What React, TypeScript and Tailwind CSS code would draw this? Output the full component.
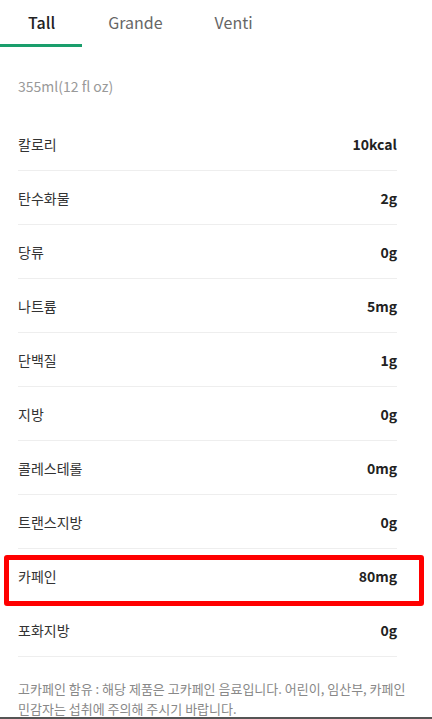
import React from "react";

const rows: [string, string][] = [
  ["칼로리", "10kcal"],
  ["탄수화물", "2g"],
  ["당류", "0g"],
  ["나트륨", "5mg"],
  ["단백질", "1g"],
  ["지방", "0g"],
  ["콜레스테롤", "0mg"],
  ["트랜스지방", "0g"],
  ["카페인", "80mg"],
  ["포화지방", "0g"],
];

export default function App() {
  return (
    <div
      className="relative w-[432px] h-[719px] overflow-hidden bg-white"
      style={{ fontFamily: '"Noto Sans CJK KR", "Noto Sans", sans-serif' }}
    >
      <div className="flex h-[47px]">
        <div className="relative flex items-center justify-center pl-[28px] pr-[27px] text-[16px] font-medium text-[#222] pb-[3px]">
          Tall
          <div className="absolute left-0 right-0 bottom-0 h-[3px] bg-[#1a9e6c]" />
        </div>
        <div className="flex items-center justify-center px-[26px] text-[16px] text-[#666] pb-[3px]">
          Grande
        </div>
        <div className="flex items-center justify-center px-[26px] text-[16px] text-[#666] pb-[3px]">
          Venti
        </div>
      </div>
      <div className="pl-[18px] pr-[35px]">
        <div className="h-[70px] flex items-center text-[14px] text-[#999] pt-[8px]">
          355ml(12 fl oz)
        </div>
        {rows.map(([k, v]) => (
          <div
            key={k}
            className="h-[54px] flex items-center justify-between border-b border-[#eeeeee] text-[14px] pt-[2px]"
          >
            <span className="text-[#333]">{k}</span>
            <span className="font-bold text-[#222]">{v}</span>
          </div>
        ))}
      </div>
      <div className="pl-[18px] pr-[18px] pt-[22px] text-[13px] leading-[20px] text-[#888]">
        고카페인 함유 : 해당 제품은 고카페인 음료입니다. 어린이, 임산부, 카페인 민감자는 섭취에 주의해 주시기 바랍니다.
      </div>
      <div className="absolute left-[4px] top-[555px] w-[420px] h-[51px] border-[5px] border-[#ff0000] rounded-[3px]" />
      <div className="absolute left-0 right-0 bottom-0 h-[2px] bg-[#555]" />
    </div>
  );
}
